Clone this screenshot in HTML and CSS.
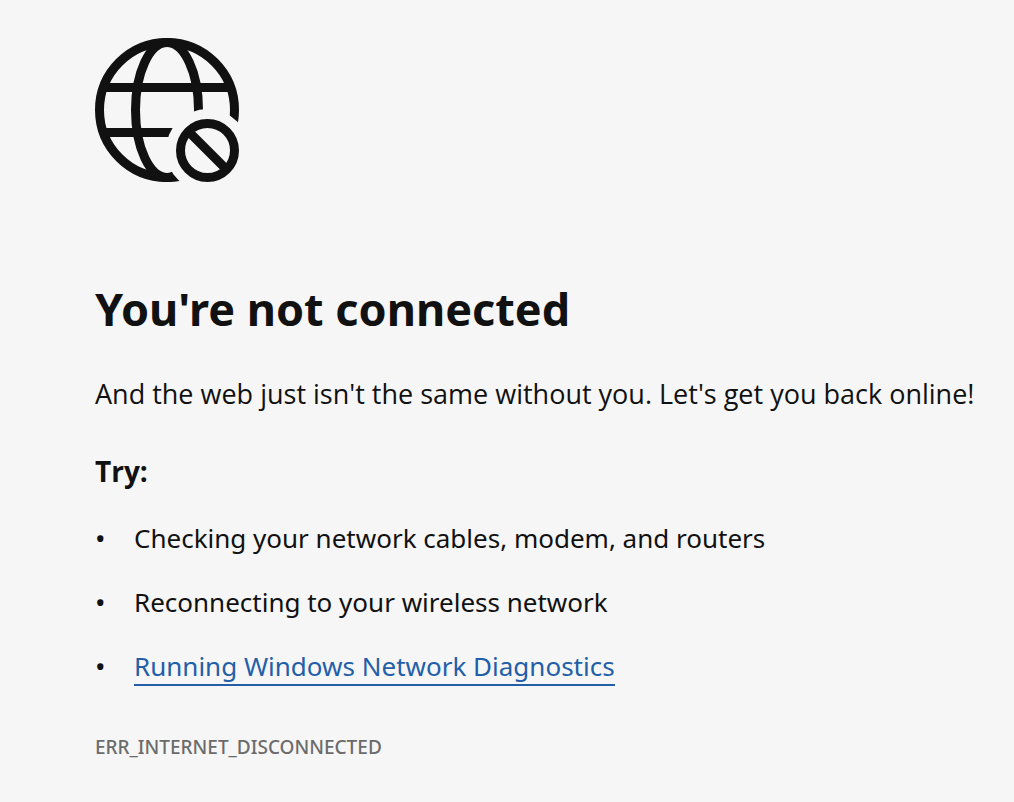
FILE: index.html
```html
<!DOCTYPE html>
<html lang="en">
<head>
    <meta charset="UTF-8">
    <meta name="viewport" content="width=device-width, initial-scale=1.0">
    <title>You're not connected</title>
    <link rel="stylesheet" href="styles.css">
</head>
<body>

<main class="error-page">
    <!-- Globe with a "blocked" badge -->
    <svg class="icon" viewBox="0 0 144 144" aria-hidden="true">
        <defs>
            <mask id="badge-cut">
                <rect width="144" height="144" fill="#fff"/>
                <circle cx="112.500" cy="112.500" r="41.500" fill="#000"/>
            </mask>
        </defs>
        <g fill="none" stroke="#111" stroke-width="9">
            <g mask="url(#badge-cut)">
                <circle cx="72" cy="72" r="67.5"/>
                <ellipse cx="72" cy="72" rx="31.5" ry="67.5"/>
                <path d="M9 49.500H135M9 94.500H135"/>
            </g>
            <circle cx="112.500" cy="112.500" r="27"/>
            <path d="M94 94L131 131"/>
        </g>
    </svg>

    <h1>You're not connected</h1>
    <p class="message">And the web just isn't the same without you. Let's get you back online!</p>

    <h2>Try:</h2>
    <ul class="tips">
        <li>Checking your network cables, modem, and routers</li>
        <li>Reconnecting to your wireless network</li>
        <li><a href="#">Running Windows Network Diagnostics</a></li>
    </ul>

    <p class="error-code">ERR_INTERNET_DISCONNECTED</p>
</main>

</body>
</html>
```
FILE: styles.css
```css
body {
    font-family: "Noto Sans", sans-serif;
    background-color: #f6f6f6;
    color: #111;
    margin: 0;
}

.error-page {
    padding: 38px 24px 38px 95px;
    font-size: 26px;
    line-height: 36px;
}

.icon {
    display: block;
    width: 144px;
    height: 144px;
}

h1 {
    margin: 95px 0 0;
    font-size: 45px;
    line-height: 64px;
}

.message {
    margin: 35px 0 0;
    font-family: "Open Sans", sans-serif;
    font-size: 27px;
}

h2 {
    margin: 41px 0 0;
    font-family: "Open Sans", sans-serif;
    font-size: 28px;
    line-height: 36px;
}

.tips {
    display: grid;
    gap: 28px;
    margin: 31px 0 0;
    padding: 0;
    list-style: none;
}

.tips li {
    display: flex;
}

.tips li::before {
    content: "•";
    width: 39px;
    font-size: 28px;
}

a {
    color: #235fa8;
    text-decoration: none;
    border-bottom: 2px solid #235fa8;
}

.error-code {
    margin: 43px 0 0;
    color: #6b6b6b;
    font-size: 19px;
    font-weight: 500;
    line-height: 36px;
}
```
